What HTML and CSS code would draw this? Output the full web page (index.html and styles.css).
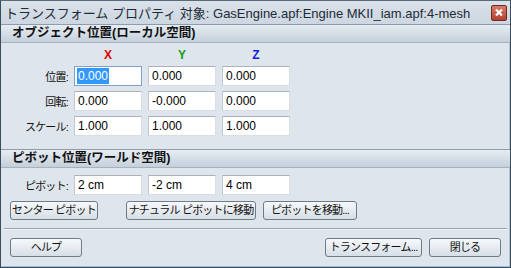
FILE: index.html
```html
<!DOCTYPE html>
<html lang="ja">
<head>
    <meta charset="UTF-8">
    <title>トランスフォーム プロパティ</title>
    <link rel="stylesheet" href="styles.css">
</head>
<body>
    <div class="window">
        <div class="titlebar">
            <span class="title">トランスフォーム プロパティ 対象: GasEngine.apf:Engine MKII_iam.apf:4-mesh</span>
            <span class="close-btn">
                <svg width="10" height="9" viewBox="0 0 10 9"><path d="M2 1.5 L8 7.5 M8 1.5 L2 7.5" stroke="#fff" stroke-width="2.2"/></svg>
            </span>
        </div>

        <!-- Object position -->
        <div class="section-header">オブジェクト位置(ローカル空間)</div>
        <div class="axis-row">
            <span></span>
            <span class="axis axis-x">X</span>
            <span class="axis axis-y">Y</span>
            <span class="axis axis-z">Z</span>
        </div>
        <div class="field-row">
            <label>位置:</label>
            <div class="input focused"><span class="selected">0.000</span></div>
            <div class="input">0.000</div>
            <div class="input">0.000</div>
        </div>
        <div class="field-row">
            <label>回転:</label>
            <div class="input">0.000</div>
            <div class="input">-0.000</div>
            <div class="input">0.000</div>
        </div>
        <div class="field-row">
            <label>スケール:</label>
            <div class="input">1.000</div>
            <div class="input">1.000</div>
            <div class="input">1.000</div>
        </div>

        <!-- Pivot position -->
        <div class="section-header pivot-header">ピボット位置(ワールド空間)</div>
        <div class="field-row pivot-row">
            <label>ピボット:</label>
            <div class="input">2 cm</div>
            <div class="input">-2 cm</div>
            <div class="input">4 cm</div>
        </div>
        <div class="button-row">
            <button class="btn btn-center">センター ピボット</button>
            <button class="btn btn-natural">ナチュラル ピボットに移動</button>
            <button class="btn btn-move">ピボットを移動...</button>
        </div>

        <div class="separator"></div>

        <div class="footer">
            <button class="btn btn-help">ヘルプ</button>
            <div class="footer-right">
                <button class="btn btn-transform">トランスフォーム...</button>
                <button class="btn btn-close">閉じる</button>
            </div>
        </div>
    </div>
</body>
</html>
```

FILE: styles.css
```css
body {
    margin: 0;
    padding: 0;
    background: #dfe5ec;
    font-family: "Liberation Sans", "Noto Sans CJK JP", sans-serif;
    font-size: 12px;
    color: #000;
}
.window {
    width: 511px;
    height: 268px;
    box-sizing: border-box;
    border: 1px solid #3a4b5c;
    border-top-color: #5a6a7a;
    box-shadow: inset 0 -1px 0 #9cc0dc, inset -1px 0 0 #b0c4d6;
    background: #dfe5ec;
    overflow: hidden;
}
.titlebar {
    height: 23px;
    display: flex;
    align-items: center;
    justify-content: space-between;
    padding: 0 3px 0 4px;
    background: linear-gradient(#d9e1e9, #cdd7e1);
}
.title {
    font-size: 13px;
    color: #1e2a36;
    white-space: nowrap;
}
.close-btn {
    width: 14px;
    height: 14px;
    border: 1px solid #6e2a22;
    border-radius: 2px;
    background: linear-gradient(#d87a6a, #b2412f);
    display: flex;
    align-items: center;
    justify-content: center;
}
.section-header {
    height: 17px;
    line-height: 17px;
    padding-left: 11px;
    font-weight: bold;
    font-size: 12.5px;
    color: #111;
    white-space: nowrap;
    border-top: 1px solid #8e9cab;
    border-bottom: 1px solid #a6b2be;
    background: linear-gradient(#e6ecf2, #c5d0db);
}
.axis-row {
    display: grid;
    grid-template-columns: 67px 68px 68px 68px;
    column-gap: 6px;
    height: 16px;
    line-height: 16px;
    margin-top: 4px;
    margin-bottom: 3px;
}
.axis {
    text-align: center;
    font-weight: bold;
    font-size: 12px;
}
.axis-x { color: #e00000; }
.axis-y { color: #10a010; }
.axis-z { color: #1020e0; }
.field-row {
    display: grid;
    grid-template-columns: 67px 68px 68px 68px;
    column-gap: 6px;
    height: 20px;
    margin-bottom: 5px;
    align-items: center;
}
.field-row label {
    text-align: right;
    font-size: 11px;
    letter-spacing: -0.8px;
    white-space: nowrap;
    color: #111;
}
.input {
    height: 20px;
    box-sizing: border-box;
    background: #fff;
    border: 1px solid #d8dee4;
    border-top-color: #aab2ba;
    border-left-color: #c0c8d0;
    padding-left: 3px;
    line-height: 18px;
    white-space: nowrap;
}
.input.focused {
    border-color: #7ea3cf;
    padding-left: 2px;
}
.selected {
    background: #3399ff;
    color: #fff;
    padding: 1px 1px;
}
.pivot-header {
    margin-top: 13px;
}
.pivot-row {
    margin-top: 7px;
    margin-bottom: 6px;
}
.button-row {
    display: flex;
    height: 19px;
    padding-left: 9px;
}
.btn {
    height: 19px;
    box-sizing: border-box;
    padding: 0;
    font-family: "Liberation Sans", "Noto Sans CJK JP", sans-serif;
    font-size: 11px;
    letter-spacing: -0.8px;
    line-height: 17px;
    white-space: nowrap;
    color: #111;
    border: 1px solid #6f7b87;
    border-radius: 3px;
    background: linear-gradient(#f7f9fb, #d6dee6);
}
.btn-center { width: 88px; }
.btn-natural { width: 130px; margin-left: 28px; }
.btn-move { width: 94px; margin-left: 7px; }
.separator {
    height: 0;
    margin: 8px 3px 0 3px;
    border-top: 1px solid #98a4b0;
    border-bottom: 1px solid #f2f5f8;
}
.footer {
    display: flex;
    justify-content: space-between;
    margin-top: 8px;
    padding: 0 9px;
}
.footer-right {
    display: flex;
    gap: 7px;
}
.btn-help { width: 72px; }
.btn-transform { width: 97px; }
.btn-close { width: 72px; }
```
